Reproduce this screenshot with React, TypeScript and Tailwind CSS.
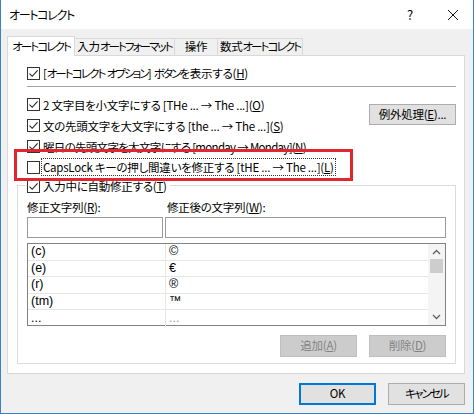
import React from "react";

const jp = "font-['Noto_Sans_CJK_JP',sans-serif] [font-feature-settings:'palt']";

// カタカナは元の UI フォントでかなり詰まって見えるので字間を詰める
function K({ children }: { children: React.ReactNode }) {
    return <span className="tracking-[-1.9px]">{children}</span>;
}

function Box({ checked }: { checked?: boolean }) {
    return (
        <span className="flex h-[13px] w-[13px] shrink-0 items-center justify-center border border-[#333] bg-white">
            {checked && (
                <svg width="11" height="11" viewBox="0 0 11 11">
                    <path d="M1.5 5.6l2.7 2.7L9.6 2.4" fill="none" stroke="#222" strokeWidth="1.1" />
                </svg>
            )}
        </span>
    );
}

function Check({ checked, children, focus, className = "" }: { checked?: boolean; children: React.ReactNode; focus?: boolean; className?: string }) {
    return (
        <div className="flex h-full items-center gap-[2px]">
            <Box checked={checked} />
            <span className={`whitespace-nowrap px-[1px] leading-[16px] ${focus ? "outline outline-1 outline-dotted outline-[#333]" : ""} ${className}`}>
                {children}
            </span>
        </div>
    );
}

function Btn({ children, disabled, primary }: { children: React.ReactNode; disabled?: boolean; primary?: boolean }) {
    const look = disabled
        ? "bg-[#cccccc] border-[#bfbfbf] text-[#838383]"
        : primary
          ? "bg-[#e1e1e1] border-[#0078d7] border-2 text-black"
          : "bg-[#e1e1e1] border-[#adadad] text-black";
    return <div className={`flex h-[22px] w-[77px] items-center justify-center border ${look}`}>{children}</div>;
}

const rows = [
    ["(c)", "©"],
    ["(e)", "€"],
    ["(r)", "®"],
    ["(tm)", "™"],
    ["...", "..."],
];

export default function App() {
    return (
        <div className={`relative flex h-[414px] w-[474px] flex-col whitespace-nowrap border-x border-b border-[#3a82c4] text-[11.5px] tracking-[-0.25px] text-black ${jp}`}>
            {/* タイトルバー */}
            <div className="flex h-[29px] items-center bg-white pl-[8px]">
                <span className="text-[12px] tracking-[-1.3px]">オートコレクト</span>
                <span className="ml-auto mr-[34px] text-[13px]">?</span>
                <svg width="12" height="12" viewBox="0 0 12 12" className="mr-[14px]">
                    <path d="M1 1l10 10M11 1L1 11" stroke="#111" strokeWidth="1" />
                </svg>
            </div>

            <div className="flex flex-1 flex-col bg-[#f0f0f0] pl-[6px] pr-[8px] pt-[7px]">
                {/* タブ */}
                <div className="flex items-end">
                    <div className="relative z-10 -mb-px flex h-[20px] w-[68px] items-center justify-center border border-b-0 border-[#d9d9d9] bg-white">
                        <K>オートコレクト</K>
                    </div>
                    <div className="flex h-[17px] w-[100px] items-center justify-center border border-l-0 border-b-0 border-[#d9d9d9] bg-[#f0f0f0]">
                        入力<K>オートフォーマット</K>
                    </div>
                    <div className="flex h-[17px] w-[43px] items-center justify-center border border-l-0 border-b-0 border-[#d9d9d9] bg-[#f0f0f0]">
                        操作
                    </div>
                    <div className="flex h-[17px] w-[85px] items-center justify-center border border-l-0 border-b-0 border-[#d9d9d9] bg-[#f0f0f0]">
                        数式<K>オートコレクト</K>
                    </div>
                </div>

                {/* パネル */}
                <div className="flex h-[319px] flex-col border border-[#d9d9d9] bg-white pt-[8px]">
                    <div className="h-[18px] pl-[19px]">
                        <Check checked>
                            [<K>オートコレクト</K> <K>オプション</K>] <K>ボタン</K>を表示する(<u>H</u>)
                        </Check>
                    </div>
                    <div className="ml-[19px] mr-[8px] mt-[4px] h-[2px] border-b border-t border-b-white border-t-[#a0a0a0]" />

                    <div className="mt-[6px] flex pl-[19px] pr-[8px]">
                        <div className="flex flex-col">
                            <div className="h-[21px]">
                                <Check checked>
                                    2 文字目を小文字にする [THe ... → The ...](<u>O</u>)
                                </Check>
                            </div>
                            <div className="h-[21px]">
                                <Check checked>
                                    文の先頭文字を大文字にする [the ... → The ...](<u>S</u>)
                                </Check>
                            </div>
                            <div className="h-[21px]">
                                <Check checked className="tracking-[-0.7px]">
                                    曜日の先頭文字を大文字にする [monday → Monday](<u>N</u>)
                                </Check>
                            </div>
                            <div className="h-[20px]">
                                <Check focus>
                                    CapsLock キーの押し間違いを修正する [tHE ... → The ...](<u>L</u>)
                                </Check>
                            </div>
                        </div>
                        <div className="ml-auto mt-[10px]">
                            <div className="flex h-[21px] w-[87px] items-center justify-center border border-[#adadad] bg-[#e1e1e1]">
                                例外処理(<u>E</u>)...
                            </div>
                        </div>
                    </div>

                    {/* グループ */}
                    <div className="ml-[9px] mr-[8px] mt-[8px] flex flex-col border border-[#dcdcdc] px-[9px] pb-[6px]">
                        <div className="-mt-[10px] h-[20px] self-start bg-white pr-[2px]">
                            <Check checked>
                                入力中に自動修正する(<u>T</u>)
                            </Check>
                        </div>
                        <div className="mt-[4px] flex h-[16px] items-center">
                            <span className="w-[140px]">
                                修正文字列(<u>R</u>):
                            </span>
                            <span>
                                修正後の文字列(<u>W</u>):
                            </span>
                        </div>
                        <div className="mt-[1px] flex gap-[2px]">
                            <div className="h-[21px] w-[136px] border border-[#9a9a9a] bg-white" />
                            <div className="h-[21px] flex-1 border border-[#9a9a9a] bg-white" />
                        </div>
                        <div className="mt-[5px] flex h-[83px] border border-[#828282] bg-white">
                            <div className="flex flex-1 flex-col font-['Liberation_Sans',sans-serif] text-[12.5px] tracking-normal">
                                {rows.map(([a, b], i) => (
                                    <div key={i} className="flex h-[16.5px] border-b border-[#e6e6e6] last:border-b-0">
                                        <div className="flex w-[138px] items-center border-r border-[#e6e6e6] pl-[3px]">{a}</div>
                                        <div className={`flex items-center pl-[3px] ${i === 4 ? "text-[#999]" : ""}`}>{b}</div>
                                    </div>
                                ))}
                            </div>
                            <div className="flex w-[17px] flex-col items-center bg-[#f4f4f4]">
                                <svg width="9" height="6" viewBox="0 0 9 6" className="mt-[5px]">
                                    <path d="M1 5l3.5-3.5L8 5" fill="none" stroke="#606060" strokeWidth="1.3" />
                                </svg>
                                <div className="mt-[4px] h-[14px] w-[13px] bg-[#cdcdcd]" />
                                <svg width="9" height="6" viewBox="0 0 9 6" className="mb-[5px] mt-auto">
                                    <path d="M1 1l3.5 3.5L8 1" fill="none" stroke="#606060" strokeWidth="1.3" />
                                </svg>
                            </div>
                        </div>
                        <div className="mt-[9px] flex justify-end gap-[12px]">
                            <Btn disabled>
                                追加(<u>A</u>)
                            </Btn>
                            <Btn disabled>
                                削除(<u>D</u>)
                            </Btn>
                        </div>
                    </div>
                </div>

                {/* OK / キャンセル */}
                <div className="mt-[9px] flex justify-end gap-[12px]">
                    <Btn primary>OK</Btn>
                    <Btn>
                        <K>キャンセル</K>
                    </Btn>
                </div>
            </div>

            {/* 注釈の赤枠 */}
            <div className="pointer-events-none absolute left-[13px] top-[149px] h-[32px] w-[339px] border-[3px] border-[#e0262e]" />
        </div>
    );
}
